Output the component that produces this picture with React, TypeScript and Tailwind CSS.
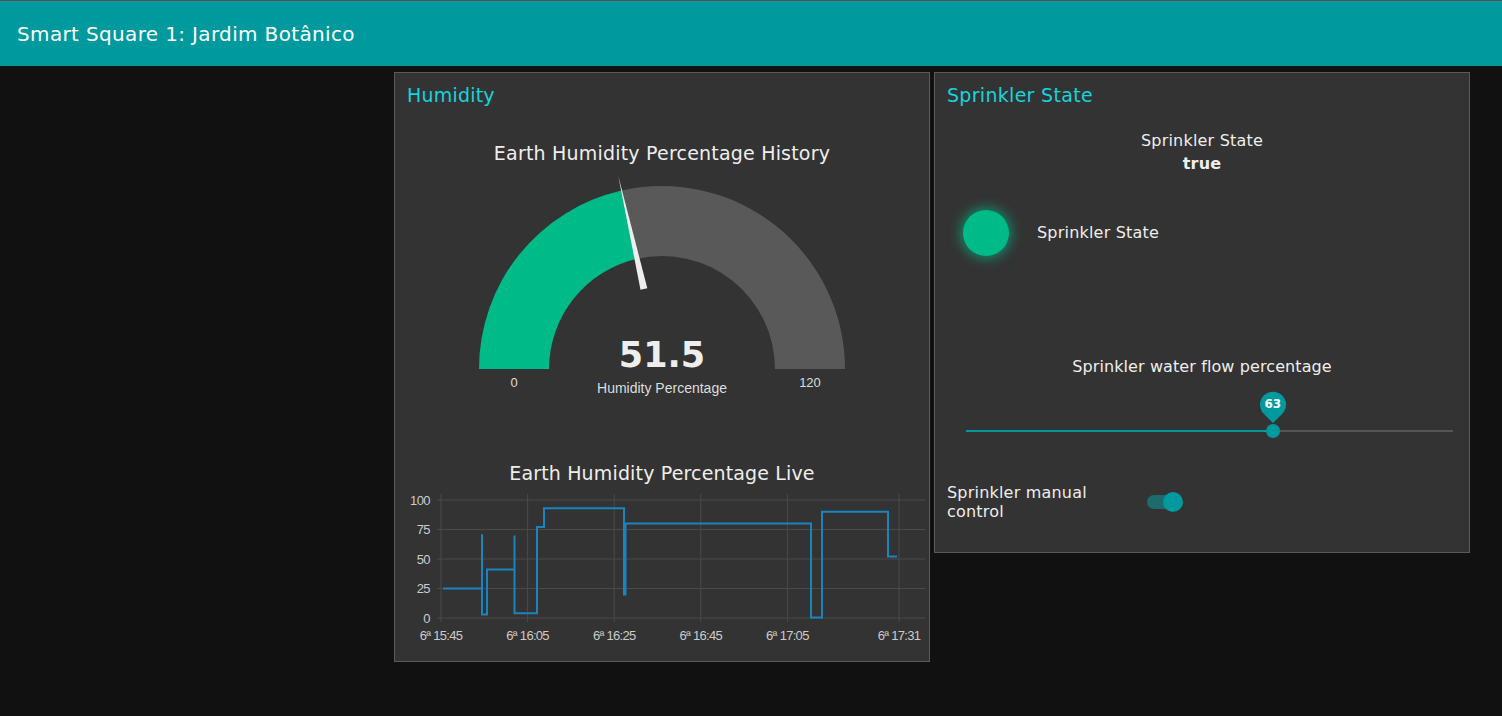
import React from 'react'

const sans = "font-['DejaVu_Sans',Verdana,sans-serif]"

const linePath =
  'M48 100.5 H87 V46.2 V126.5 H92 V81.6 H119.5 V47.4 V125.3 H142 V39.1 H149 V20.3 H229 V106.4 H230.5 V35.6 H416 V129.4 H427 V23.8 H493 V68.6 H502'

const yTicks = [100, 75, 50, 25, 0]
const xTicks = [
  { x: 46, label: '6ª 15:45' },
  { x: 132.6, label: '6ª 16:05' },
  { x: 219.2, label: '6ª 16:25' },
  { x: 305.8, label: '6ª 16:45' },
  { x: 392.4, label: '6ª 17:05' },
  { x: 504, label: '6ª 17:31' },
]

const Gauge: React.FC = () => (
  <svg width="534" height="235" viewBox="0 0 534 235" className="block">
    <path d="M84 204 A183 183 0 0 1 226.6 25.5 L242.1 93.8 A113 113 0 0 0 154 204 Z" fill="#00bb88" />
    <path d="M226.6 25.5 A183 183 0 0 1 450 204 L380 204 A113 113 0 0 0 242.1 93.8 Z" fill="#595959" />
    <polygon points="223.3,10.9 252.3,123.2 245.5,124.8" fill="#eeeeee" />
    <text x="267" y="202" textAnchor="middle" fill="#eeeeee" fontSize="35" fontWeight="700" fontFamily="'DejaVu Sans', Verdana, sans-serif">
      51.5
    </text>
    <text x="267" y="228" textAnchor="middle" fill="#dddddd" fontSize="14" fontFamily="'Liberation Sans', Arial, sans-serif">
      Humidity Percentage
    </text>
    <text x="119" y="222" textAnchor="middle" fill="#dddddd" fontSize="13" fontFamily="'Liberation Sans', Arial, sans-serif">
      0
    </text>
    <text x="415" y="222" textAnchor="middle" fill="#dddddd" fontSize="13" fontFamily="'Liberation Sans', Arial, sans-serif">
      120
    </text>
  </svg>
)

const LiveChart: React.FC = () => (
  <svg width="534" height="163" viewBox="0 0 534 163" className="block mt-[3px]">
    {yTicks.map((v) => {
      const y = 12 + (100 - v) * 1.18
      return (
        <g key={v}>
          <line x1="42" x2="530" y1={y} y2={y} stroke="#4a4a4a" strokeWidth="1" />
          <text x="35" y={y + 4.5} textAnchor="end" fill="#cccccc" fontSize="13" letterSpacing="-0.6" fontFamily="'Liberation Sans', Arial, sans-serif">
            {v}
          </text>
        </g>
      )
    })}
    {xTicks.map((t) => (
      <g key={t.label}>
        <line x1={t.x} x2={t.x} y1="6" y2="134" stroke="#4a4a4a" strokeWidth="1" />
        <text x={t.x} y="152" textAnchor="middle" fill="#cccccc" fontSize="13" letterSpacing="-0.7" fontFamily="'Liberation Sans', Arial, sans-serif">
          {t.label}
        </text>
      </g>
    ))}
    <path d={linePath} fill="none" stroke="#1a84c0" strokeWidth="2" />
  </svg>
)

const App: React.FC = () => {
  return (
    <div className={`min-h-screen w-full bg-[#111111] ${sans}`}>
      <div className="h-[66px] border-t border-[#555555] bg-[#00999e] flex items-center pl-[17px]">
        <span className="text-[20px] tracking-[0.35px] text-white">Smart Square 1: Jardim Botânico</span>
      </div>

      <div className="flex items-start gap-[4px] pl-[394px] pt-[6px]">
        {/* Humidity */}
        <div className="w-[536px] h-[590px] bg-[#333333] border border-[#5a5a5a] flex flex-col">
          <div className="h-[45px] flex items-center pl-3 text-[19px] tracking-[0.2px] text-[#13d4df]">Humidity</div>
          <div className="mt-[23px] h-6 leading-6 text-center text-[19px] tracking-[0.2px] text-[#eeeeee]">Earth Humidity Percentage History</div>
          <Gauge />
          <div className="mt-[61px] h-6 leading-6 text-center text-[19px] tracking-[0.15px] text-[#eeeeee]">Earth Humidity Percentage Live</div>
          <LiveChart />
        </div>

        {/* Sprinkler */}
        <div className="w-[536px] h-[481px] bg-[#333333] border border-[#5a5a5a] flex flex-col">
          <div className="h-[45px] flex items-center pl-3 text-[19px] tracking-[0.3px] text-[#13d4df]">Sprinkler State</div>
          <div className="mt-[11px] text-center text-[16px] tracking-[0.2px] leading-[23px] text-[#eeeeee]">
            <div>Sprinkler State</div>
            <div className="font-bold">true</div>
          </div>
          <div className="mt-[35px] flex items-center pl-[28px]">
            <div className="w-[46px] h-[46px] rounded-full bg-[#00bb88] shadow-[0_0_12px_3px_rgba(0,187,136,0.6)]" />
            <span className="ml-[28px] text-[16px] tracking-[0.2px] text-[#eeeeee]">Sprinkler State</span>
          </div>
          <div className="mt-[100px] h-[22px] leading-[22px] text-center text-[16px] tracking-[0.1px] text-[#eeeeee]">Sprinkler water flow percentage</div>
          <div className="relative mt-[10px] h-[52px] ml-[31px] mr-[16px]">
            <div className="absolute left-0 right-0 top-[42px] h-[2px] bg-[#555555]" />
            <div className="absolute left-0 top-[42px] h-[2px] w-[63%] bg-[#00999e]" />
            <div className="absolute left-[63%] top-[36px] -ml-[7px] w-[14px] h-[14px] rounded-full bg-[#00999e]" />
            <div className="absolute left-[63%] top-[2px] -ml-[14px] w-[28px] h-[34px]">
              <svg width="28" height="34" viewBox="0 0 28 34" className="absolute inset-0">
                <path d="M14 33 L4.5 23.5 A13 13 0 1 1 23.5 23.5 Z" fill="#00999e" />
              </svg>
              <span className="absolute left-0 right-0 top-[6px] text-center text-[12px] font-bold text-white leading-[16px]">63</span>
            </div>
          </div>
          <div className="mt-[43px] flex items-center pl-3">
            <div className="w-[160px] text-[16px] tracking-[0.2px] leading-[19px] text-[#eeeeee]">Sprinkler manual control</div>
            <div className="relative ml-[40px] w-[36px] h-[20px] flex items-center">
              <div className="w-[34px] h-[14px] rounded-full bg-[#1e6b6d]" />
              <div className="absolute left-[16px] top-0 w-[20px] h-[20px] rounded-full bg-[#00999e]" />
            </div>
          </div>
        </div>
      </div>
    </div>
  )
}

export default App
